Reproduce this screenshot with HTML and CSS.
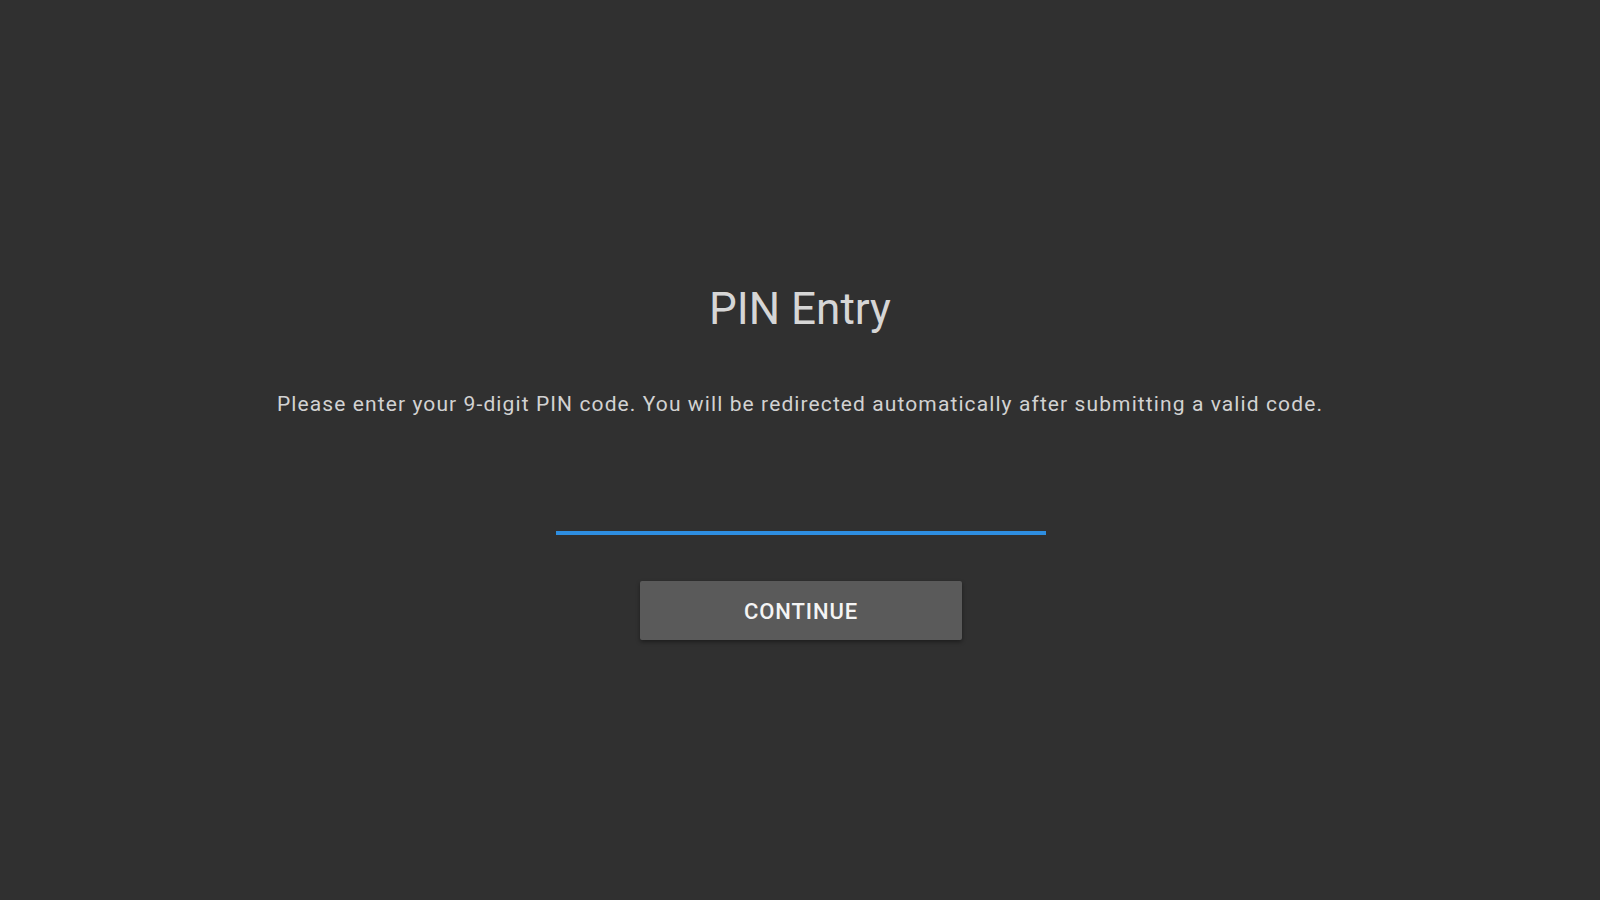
FILE: index.html
```html
<!DOCTYPE html>
<html>
<head>
<meta charset="utf-8">
<link rel="stylesheet" href="styles.css">
</head>
<body>
<main class="page">
  <h1 class="title">PIN Entry</h1>
  <p class="desc">Please enter your 9-digit PIN code. You will be redirected automatically after submitting a valid code.</p>
  <div class="field"><input class="pin" type="text" aria-label="PIN"></div>
  <button class="btn">CONTINUE</button>
</main>
</body>
</html>
```
FILE: styles.css
```css
html, body {
  margin: 0;
  padding: 0;
  background: #303030;
  height: 100%;
}
body {
  font-family: Roboto, "Liberation Sans", sans-serif;
}
.page {
  display: flex;
  flex-direction: column;
  align-items: center;
  padding-top: 284px;
}
.title {
  margin: 0;
  font-size: 44px;
  line-height: 50px;
  font-weight: 400;
  color: #d6d6d6;
}
.desc {
  margin: 58px 0 0;
  font-size: 21px;
  line-height: 24px;
  letter-spacing: 1.1px;
  color: #d2d2d2;
}
.field {
  margin-top: 79px;
  width: 490px;
  margin-left: 1px;
}
.pin {
  display: block;
  box-sizing: border-box;
  width: 100%;
  height: 40px;
  background: transparent;
  border: none;
  border-bottom: 4px solid #2e8ee0;
  outline: none;
  color: #e0e0e0;
  font-family: inherit;
  font-size: 22px;
}
.btn {
  margin-top: 46px;
  margin-left: 2px;
  width: 322px;
  height: 59px;
  padding-top: 3px;
  background: #5a5a5a;
  border: none;
  border-radius: 2px;
  box-shadow: 0 2px 4px rgba(0,0,0,0.4);
  color: #f4f4f4;
  font-family: inherit;
  font-size: 22px;
  font-weight: 500;
  letter-spacing: 0.9px;
}
```
